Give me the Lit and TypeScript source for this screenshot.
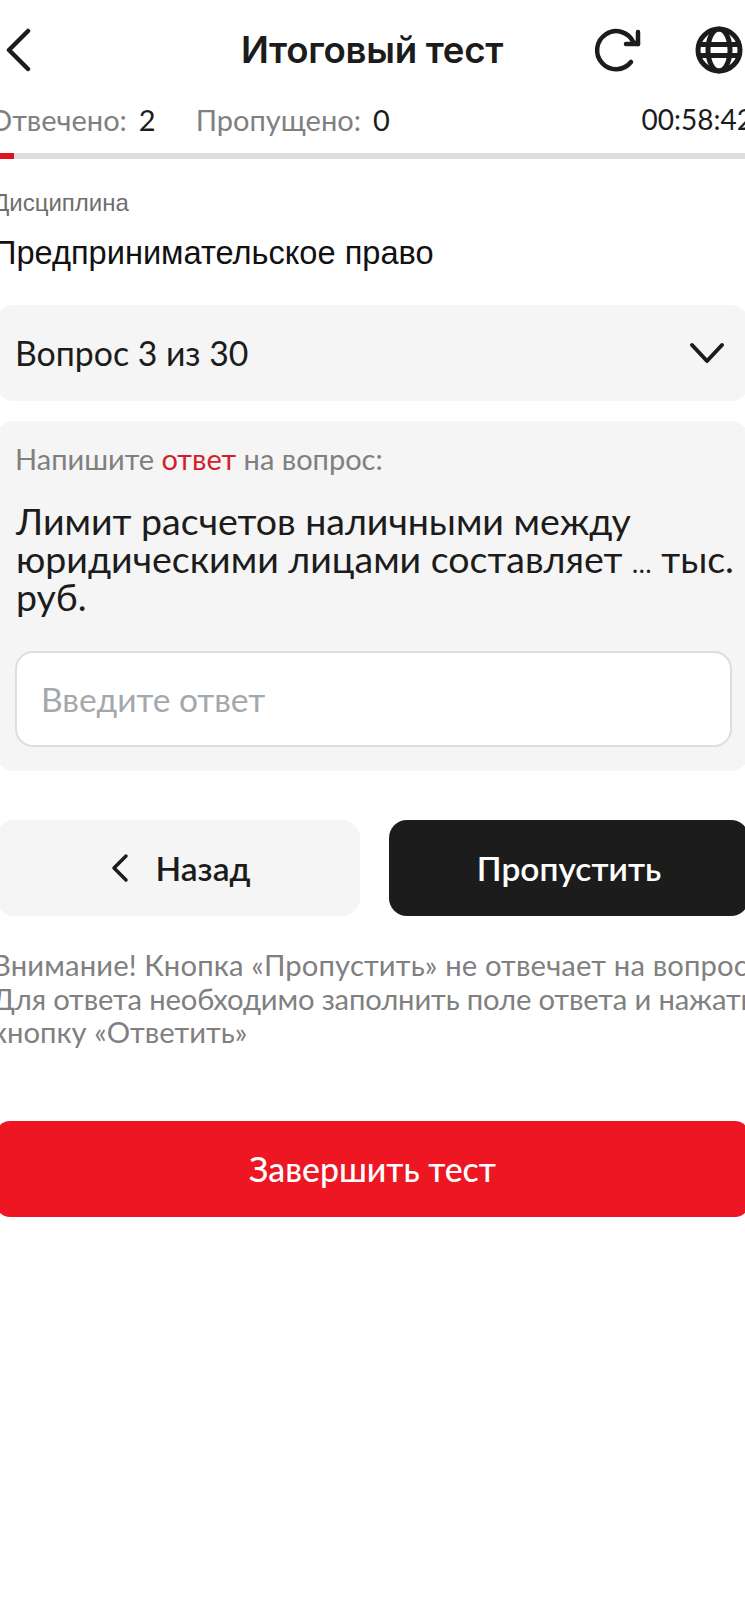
import { LitElement, html, css } from "lit";
import { customElement } from "lit/decorators.js";

@customElement("app-root")
export class AppRoot extends LitElement {
  static styles = css`
    :host { display: block; width: 745px; height: 1612px; overflow: hidden; background: #fff; font-family: "Lato", "Open Sans", sans-serif; color: #1c1c1c; }
    .page { width: 753px; margin-left: -4px; display: flex; flex-direction: column; }
    .header { height: 99px; display: flex; align-items: center; position: relative; }
    .back { margin-left: 10px; width: 26px; height: 44px; }
    .title { position: absolute; left: 245px; top: 0; font: 600 36.7px/99px "Inter", sans-serif; letter-spacing: -0.3px; white-space: nowrap; }
    .icons { margin-left: auto; display: flex; gap: 54px; align-items: center; margin-right: 6px; }
    .stats { height: 54px; box-sizing: border-box; padding-bottom: 14px; display: flex; align-items: center; font-size: 29px; color: #808080; white-space: nowrap; margin-left: -7px; }
    .stats b { font-weight: 400; color: #1c1c1c; margin-left: 12px; }
    .stats .skip { margin-left: 40px; }
    .timer { margin-left: auto; color: #1c1c1c; margin-right: -4px; font-size: 28px; }
    .bar { height: 6px; background: #dedee2; }
    .bar i { display: block; width: 18px; height: 100%; background: #e2111f; }
    .disc { font: 24px/30px "Liberation Sans", sans-serif; color: #6e6e6e; margin: 29px 0 0 -3px; }
    .subj { font: 32.6px/40px "Liberation Sans", sans-serif; color: #111; margin: 15px 0 0 -3px; white-space: nowrap; }
    .select { margin-top: 32px; height: 96px; border-radius: 18px; background: #f5f5f5; display: flex; align-items: center; justify-content: space-between; padding: 0 23px 0 19px; font-size: 33.8px; }
    .card { margin-top: 20px; border-radius: 18px; background: #f5f5f5; padding: 20px 19px 24px; }
    .hint { font-size: 29px; line-height: 36px; color: #808080; }
    .hint em { font-style: normal; color: #d31f2b; }
    .q { margin: 25px 0 0 1px; font-size: 37.5px; line-height: 38px; color: #1c1c1c; white-space: nowrap; }
    .dots { font-size: 26px; line-height: 1; }
    .input { margin: 35px -2px 0 0; height: 96px; box-sizing: border-box; border: 2px solid #dedee2; border-radius: 18px; background: #fff; display: flex; align-items: center; padding-left: 24px; font-size: 33.5px; color: #a3a8ac; }
    .btns { margin-top: 49px; display: flex; gap: 29px; }
    .btn { flex: 1; height: 96px; border-radius: 18px; display: flex; align-items: center; justify-content: center; font-size: 33.5px; font-weight: 600; }
    .b1 { background: #f5f5f5; gap: 26px; box-sizing: border-box; padding-left: 4px; }
    .b2 { background: #1c1c1c; color: #fff; }
    .note { margin: 32px 0 0 -4px; font-size: 29.2px; line-height: 33.5px; color: #808080; white-space: nowrap; }
    .l1 { letter-spacing: 0.15px; }
    .l2 { letter-spacing: -0.15px; }
    .finish { margin-top: 72px; height: 96px; border-radius: 14px; background: #ed1622; color: #fff; display: flex; align-items: center; justify-content: center; font-size: 33.8px; font-weight: 500; }
  `;
  render() {
    return html`<div class="page">
      <div class="header">
        <svg class="back" viewBox="0 0 26 44" fill="none" stroke="#1c1c1c" stroke-width="4.5" stroke-linecap="round" stroke-linejoin="round"><path d="M22 3 3 22l19 19"/></svg>
        <div class="title">Итоговый тест</div>
        <div class="icons">
          <svg width="48" height="48" viewBox="0 0 48 48" fill="none" stroke="#1c1c1c" stroke-width="4.5" stroke-linecap="round" stroke-linejoin="round"><path d="M38 36A19 19 0 1 1 40.5 16.5L45 18"/><path d="M45 6V18H33"/></svg>
          <svg width="48" height="48" viewBox="0 0 48 48" fill="none" stroke="#1c1c1c" stroke-width="5"><circle cx="24" cy="24" r="21"/><ellipse cx="24" cy="24" rx="11" ry="21"/><path d="M3 18.5h42M3 29.5h42"/></svg>
        </div>
      </div>
      <div class="stats"><span>Отвечено:<b>2</b></span><span class="skip">Пропущено:<b>0</b></span><span class="timer">00:58:42</span></div>
      <div class="bar"><i></i></div>
      <div class="disc">Дисциплина</div>
      <div class="subj">Предпринимательское право</div>
      <div class="select"><span>Вопрос 3 из 30</span>
        <svg width="38" height="24" viewBox="0 0 38 24" fill="none" stroke="#1c1c1c" stroke-width="4" stroke-linecap="round" stroke-linejoin="round"><path d="M4 4l15 16L34 4"/></svg></div>
      <div class="card">
        <div class="hint">Напишите <em>ответ</em> на вопрос:</div>
        <div class="q">Лимит расчетов наличными между<br>юридическими лицами составляет <span class="dots">…</span> тыс.<br>руб.</div>
        <div class="input">Введите ответ</div>
      </div>
      <div class="btns">
        <div class="btn b1"><svg width="20" height="30" viewBox="0 0 20 30" fill="none" stroke="#1c1c1c" stroke-width="3.5" stroke-linecap="round" stroke-linejoin="round"><path d="M16 3 4 15l12 12"/></svg><span>Назад</span></div>
        <div class="btn b2">Пропустить</div>
      </div>
      <div class="note"><span class="l1">Внимание! Кнопка «Пропустить» не отвечает на вопрос.</span><br><span class="l2">Для ответа необходимо заполнить поле ответа и нажать</span><br>кнопку «Ответить»</div>
      <div class="finish">Завершить тест</div>
    </div>`;
  }
}
